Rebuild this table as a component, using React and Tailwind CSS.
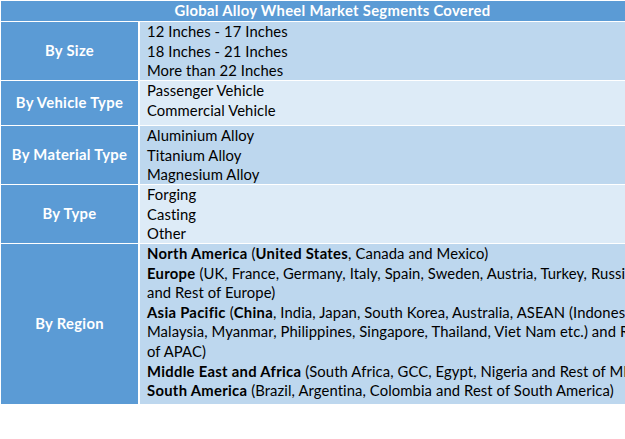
export default function App() {
  const font = { fontFamily: "Lato, 'Open Sans', sans-serif" };
  const rows = [
    { label: "By Size", h: "h-[58px]", bg: "bg-[#BDD7EE]", items: ["12 Inches - 17 Inches", "18 Inches - 21 Inches", "More than 22 Inches"] },
    { label: "By Vehicle Type", h: "h-[44px]", bg: "bg-[#DDEBF7]", items: ["Passenger Vehicle", "Commercial Vehicle"] },
    { label: "By Material Type", h: "h-[58px]", bg: "bg-[#BDD7EE]", items: ["Aluminium Alloy", "Titanium Alloy", "Magnesium Alloy"] },
    { label: "By Type", h: "h-[58px]", bg: "bg-[#DDEBF7]", items: ["Forging", "Casting", "Other"] },
  ];
  return (
    <div className="w-[625px] h-[439px] overflow-hidden bg-white" style={font}>
      <div className="w-[664px] pt-px pl-px flex flex-col gap-px text-[14.8px] leading-[19.6px] text-black">
        <div className="h-[20px] bg-[#5B9BD5] flex items-center justify-center font-bold tracking-[0.3px] text-white">
          Global Alloy Wheel Market Segments Covered
        </div>
        {rows.map((r) => (
          <div key={r.label} className={`flex gap-[2px] ${r.h}`}>
            <div className="w-[137px] shrink-0 bg-[#5B9BD5] flex items-center justify-center font-bold tracking-[0.3px] text-white">
              {r.label}
            </div>
            <div className={`flex-1 ${r.bg} pl-[7px] whitespace-nowrap tracking-[0.1px]`}>
              {r.items.map((t) => (
                <div key={t}>{t}</div>
              ))}
            </div>
          </div>
        ))}
        <div className="flex gap-[2px] h-[160px]">
          <div className="w-[137px] shrink-0 bg-[#5B9BD5] flex items-center justify-center font-bold tracking-[0.3px] text-white">
            By Region
          </div>
          <div className="flex-1 bg-[#BDD7EE] pl-[7px] whitespace-nowrap tracking-[0.1px] [&_b]:tracking-[0.3px]">
            <div><b>North America</b> (<b>United States</b>, Canada and Mexico)</div>
            <div><b>Europe</b> (UK, France, Germany, Italy, Spain, Sweden, Austria, Turkey, Russia,</div>
            <div>and Rest of Europe)</div>
            <div><b>Asia Pacific</b> (<b>China</b>, India, Japan, South Korea, Australia, ASEAN (Indonesia,</div>
            <div>Malaysia, Myanmar, Philippines, Singapore, Thailand, Viet Nam etc.) and Rest</div>
            <div>of APAC)</div>
            <div><b>Middle East and Africa</b> (South Africa, GCC, Egypt, Nigeria and Rest of MEA)</div>
            <div><b>South America</b> (Brazil, Argentina, Colombia and Rest of South America)</div>
          </div>
        </div>
      </div>
    </div>
  );
}
